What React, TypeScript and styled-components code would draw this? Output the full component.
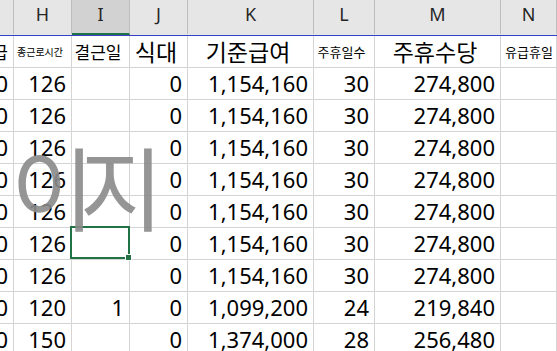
import * as React from "react";
import styled, {createGlobalStyle} from "styled-components";

const GlobalStyle = createGlobalStyle`
  html, body {
    margin: 0;
    padding: 0;
    background: #ffffff;
    overflow: hidden;
  }
  body {
    font-family: "Noto Sans", "Noto Sans CJK KR", sans-serif;
  }
`

const COLS = "14px 58px 58px 58px 126px 61px 126px 1fr";

const Sheet = styled.div`
  position: relative;
  width: 557px;
  height: 351px;
  overflow: hidden;
  background: #ffffff;
`

const HeaderBar = styled.div`
  display: grid;
  grid-template-columns: ${COLS};
  height: 35px;
  background: #e6e6e6;
  border-bottom: 1px solid #3640c8;
`

const ColLetter = styled.div<{ $active?: boolean }>`
  display: flex;
  align-items: center;
  justify-content: center;
  padding-bottom: 6px;
  box-sizing: border-box;
  border-right: 1px solid #bdbdbd;
  font-family: "Noto Sans", sans-serif;
  font-size: 18px;
  color: #262626;
  background: ${p => (p.$active ? "#d2d2d2" : "transparent")};
  border-bottom: 2px solid ${p => (p.$active ? "#217346" : "transparent")};
`

const Grid = styled.div`
  display: grid;
  grid-template-columns: ${COLS};
  grid-auto-rows: 32px;
`

const Cell = styled.div<{ $align?: "left" | "center" | "right"; $size?: number; $selected?: boolean }>`
  position: relative;
  display: flex;
  align-items: center;
  justify-content: ${p =>
    p.$align === "left" ? "flex-start" : p.$align === "center" ? "center" : "flex-end"};
  padding: 0 ${p => (p.$align === "left" ? "0 0 4px" : "5px 0 0")};
  box-sizing: border-box;
  border-right: 1px solid #d4d4d4;
  border-bottom: 1px solid #d4d4d4;
  font-size: ${p => p.$size ?? 22}px;
  line-height: 31px;
  color: #000000;
  white-space: nowrap;
  overflow: ${p => (p.$selected ? "visible" : "hidden")};
  z-index: ${p => (p.$selected ? 2 : "auto")};
`

const Label = styled(Cell)`
  font-family: "Noto Sans CJK KR", sans-serif;
  overflow: visible;
`

const Selection = styled.div`
  position: absolute;
  left: -2px;
  top: -2px;
  right: -1px;
  bottom: 0;
  border: 2px solid #217346;
  pointer-events: none;
`

const Handle = styled.span`
  position: absolute;
  right: -4px;
  bottom: -4px;
  width: 5px;
  height: 5px;
  background: #217346;
  border: 1px solid #ffffff;
`

const Watermark = styled.div`
  position: absolute;
  left: 11px;
  top: 139px;
  font-family: "Noto Sans CJK KR", sans-serif;
  font-size: 91px;
  line-height: 1;
  letter-spacing: -15px;
  color: #8a8a8a;
  opacity: 0.9;
  pointer-events: none;
  z-index: 3;
`

type Row = { h: string; i: string; k: string; l: string; m: string };

const rows: Row[] = [
    {h: "126", i: "", k: "1,154,160", l: "30", m: "274,800"},
    {h: "126", i: "", k: "1,154,160", l: "30", m: "274,800"},
    {h: "126", i: "", k: "1,154,160", l: "30", m: "274,800"},
    {h: "126", i: "", k: "1,154,160", l: "30", m: "274,800"},
    {h: "126", i: "", k: "1,154,160", l: "30", m: "274,800"},
    {h: "126", i: "", k: "1,154,160", l: "30", m: "274,800"},
    {h: "126", i: "", k: "1,154,160", l: "30", m: "274,800"},
    {h: "120", i: "1", k: "1,099,200", l: "24", m: "219,840"},
    {h: "150", i: "", k: "1,374,000", l: "28", m: "256,480"},
];

const letters = ["", "H", "I", "J", "K", "L", "M", "N"];

function App() {
    return (
        <Sheet>
            <GlobalStyle/>
            <HeaderBar>
                {letters.map((c, n) => (
                    <ColLetter key={n} $active={c === "I"}>{c}</ColLetter>
                ))}
            </HeaderBar>

            <Grid>
                {/* 항목 이름 줄 */}
                <Label $align="right" $size={17}>급</Label>
                <Label $align="center" $size={10}>종근로시간</Label>
                <Label $align="center" $size={17}>결근일</Label>
                <Label $align="center" $size={23}>식대</Label>
                <Label $align="center" $size={23}>기준급여</Label>
                <Label $align="center" $size={13}>주휴일수</Label>
                <Label $align="center" $size={23}>주휴수당</Label>
                <Label $align="left" $size={13}>유급휴일</Label>

                {rows.map((r, n) => (
                    <React.Fragment key={n}>
                        <Cell>0</Cell>
                        <Cell>{r.h}</Cell>
                        <Cell $selected={n === 5}>
                            {r.i}
                            {n === 5 && (
                                <Selection>
                                    <Handle/>
                                </Selection>
                            )}
                        </Cell>
                        <Cell>0</Cell>
                        <Cell>{r.k}</Cell>
                        <Cell>{r.l}</Cell>
                        <Cell>{r.m}</Cell>
                        <Cell/>
                    </React.Fragment>
                ))}
            </Grid>

            <Watermark>이지</Watermark>
        </Sheet>
    );
}

export default App;
